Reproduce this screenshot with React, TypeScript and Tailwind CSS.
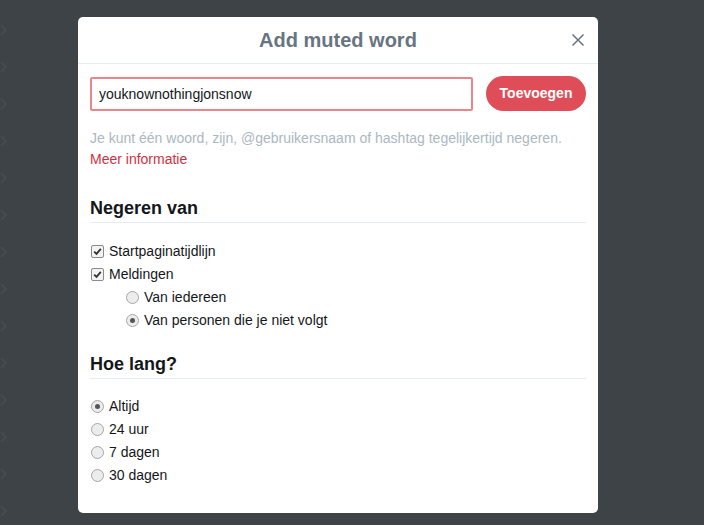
import React, {useState} from "react";

const font = {fontFamily: '"Liberation Sans", Arial, sans-serif'};

const Check = ({checked}: { checked: boolean }) => (
    <span className="inline-flex items-center justify-center w-[13px] h-[13px] border border-[#8a8a8a] rounded-[2px] bg-[#f3f3f3] mr-[5px]">
        {checked && (
            <svg width="9" height="9" viewBox="0 0 9 9">
                <path d="M1.2 4.6 L3.5 6.9 L7.8 1.8" stroke="#333" strokeWidth="1.8" fill="none"/>
            </svg>
        )}
    </span>
);

const Radio = ({checked}: { checked: boolean }) => (
    <span className="inline-flex items-center justify-center w-[13px] h-[13px] rounded-full border border-[#a6a6a6] bg-[#ececec] mr-[5px]">
        {checked && <span className="w-[5px] h-[5px] rounded-full bg-[#555]"/>}
    </span>
);

const Row = ({children, indent}: { children: React.ReactNode; indent?: boolean }) => (
    <div className={`flex items-center h-[23px] text-[14px] text-[#14171a] ${indent ? "pl-[36px]" : "pl-[1px]"}`}>
        {children}
    </div>
);

const App = () => {
    const [word, setWord] = useState("youknownothingjonsnow");
    const [from, setFrom] = useState("notfollow");
    const [duration, setDuration] = useState("always");

    const chevrons = Array.from({length: 14}, (_, i) => i);

    return (
        <div className="w-[704px] h-[525px] bg-[#3e4347] relative overflow-hidden" style={font}>
            {/* faint page content behind the overlay */}
            <div className="absolute left-0 top-[21px] flex flex-col gap-[19px]">
                {chevrons.map(i => (
                    <svg key={i} width="8" height="18" viewBox="0 0 8 18">
                        <path d="M1 4 L6 9 L1 14" stroke="#464b50" strokeWidth="2" fill="none"/>
                    </svg>
                ))}
            </div>

            <div className="absolute left-[78px] top-[17px] w-[520px] bg-white rounded-[5px] pb-[26px]">
                <div className="relative h-[47px] flex items-center justify-center border-b border-[#e6ecf0]">
                    <h2 className="text-[20px] font-bold text-[#66757f]">Add muted word</h2>
                    <button className="absolute right-[13px] top-[16px] text-[#66757f]">
                        <svg width="14" height="14" viewBox="0 0 14 14">
                            <path d="M1.5 1.5 L12.5 12.5 M12.5 1.5 L1.5 12.5" stroke="#66757f" strokeWidth="1.5"/>
                        </svg>
                    </button>
                </div>

                <div className="px-[12px]">
                    <div className="flex items-center gap-[13px] mt-[12px]">
                        <input
                            value={word}
                            onChange={e => setWord(e.target.value)}
                            className="w-[383px] h-[34px] border-2 border-[#e8868c] rounded-[2px] px-[7px] text-[14px] text-[#14171a] outline-none"
                            style={font}
                        />
                        <button className="w-[100px] h-[35px] rounded-full bg-[#df4e58] text-white text-[14px] font-bold">
                            Toevoegen
                        </button>
                    </div>

                    <p className="mt-[17px] text-[14px] leading-[21px] text-[#aab8c2]">
                        Je kunt één woord, zijn, @gebruikersnaam of hashtag tegelijkertijd negeren.
                        <br/>
                        <a className="text-[#d0323c] cursor-pointer">Meer informatie</a>
                    </p>

                    <h3 className="mt-[27px] text-[18px] font-bold text-[#14171a] pb-[3px] border-b border-[#e6ecf0] leading-[22px]">
                        Negeren van
                    </h3>
                    <div className="mt-[17px]">
                        <Row><Check checked/>Startpaginatijdlijn</Row>
                        <Row><Check checked/>Meldingen</Row>
                        <Row indent>
                            <span className="contents" onClick={() => setFrom("all")}><Radio checked={from === "all"}/></span>
                            Van iedereen
                        </Row>
                        <Row indent>
                            <span className="contents" onClick={() => setFrom("notfollow")}><Radio checked={from === "notfollow"}/></span>
                            Van personen die je niet volgt
                        </Row>
                    </div>

                    <h3 className="mt-[21px] text-[18px] font-bold text-[#14171a] pb-[3px] border-b border-[#e6ecf0] leading-[22px]">
                        Hoe lang?
                    </h3>
                    <div className="mt-[16px]">
                        {[
                            ["always", "Altijd"],
                            ["24h", "24 uur"],
                            ["7d", "7 dagen"],
                            ["30d", "30 dagen"],
                        ].map(([key, label]) => (
                            <Row key={key}>
                                <span className="contents" onClick={() => setDuration(key)}><Radio checked={duration === key}/></span>
                                {label}
                            </Row>
                        ))}
                    </div>
                </div>
            </div>
        </div>
    );
};

export default App;
